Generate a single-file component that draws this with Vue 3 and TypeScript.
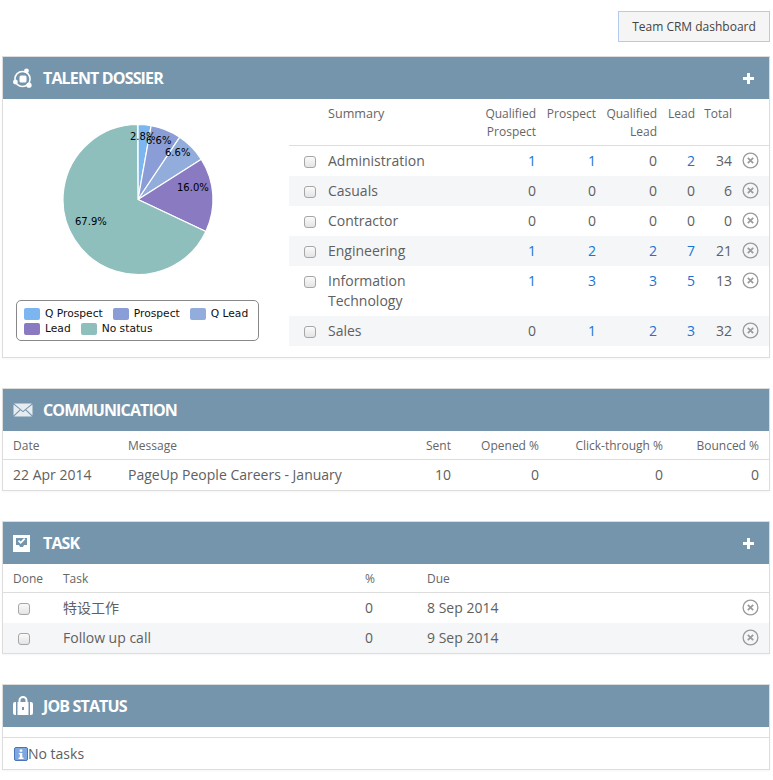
<template>
  <div class="page">
    <div class="top-bar">
      <button class="crm-btn" type="button">Team CRM dashboard</button>
    </div>

    <section class="panel">
      <header class="panel-head">
        <svg class="head-icon" viewBox="0 0 20 20" width="20" height="20">
          <circle cx="9.5" cy="11" r="7.6" fill="none" stroke="#fff" stroke-width="1.5" />
          <circle cx="13.5" cy="2.8" r="2.4" fill="#fff" />
          <circle cx="2.4" cy="14" r="2.4" fill="#fff" />
          <circle cx="16" cy="17.2" r="2.6" fill="#fff" />
          <rect x="6.5" y="7.5" width="7" height="7" rx="1.5" fill="#fff" />
        </svg>
        <h2>TALENT DOSSIER</h2>
        <svg class="plus" viewBox="0 0 11 11" width="11" height="11">
          <path d="M4 0h3v4h4v3H7v4H4V7H0V4h4z" fill="#fff" />
        </svg>
      </header>
      <div class="dossier-body">
        <div class="chart-col">
          <svg class="pie" viewBox="0 0 280 165" width="280" height="165">
            <path
              v-for="s in slices"
              :key="s.name"
              :d="s.path"
              :fill="s.color"
              stroke="#fff"
              stroke-width="1.2"
            />
            <text
              v-for="s in slices"
              :key="s.name + '-label'"
              :x="s.lx"
              :y="s.ly"
              class="pie-label"
            >{{ s.pct }}</text>
          </svg>
          <div class="legend">
            <span v-for="s in slices" :key="s.name" class="legend-item">
              <i class="swatch" :style="{ background: s.color }"></i>{{ s.name }}
            </span>
          </div>
        </div>
        <table class="grid summary">
          <colgroup>
            <col style="width: 39px" />
            <col />
            <col style="width: 52px" />
            <col style="width: 60px" />
            <col style="width: 61px" />
            <col style="width: 38px" />
            <col style="width: 37px" />
            <col style="width: 37px" />
          </colgroup>
          <thead>
            <tr>
              <th></th>
              <th class="left wide">Summary</th>
              <th>Qualified Prospect</th>
              <th>Prospect</th>
              <th>Qualified Lead</th>
              <th>Lead</th>
              <th>Total</th>
              <th></th>
            </tr>
          </thead>
          <tbody>
            <tr v-for="row in summaryRows" :key="row.name">
              <td class="check"><input type="checkbox" /></td>
              <td class="left name">{{ row.name }}</td>
              <td v-for="(n, i) in row.counts" :key="i">
                <a v-if="n > 0" class="count">{{ n }}</a>
                <template v-else>0</template>
              </td>
              <td>{{ row.total }}</td>
              <td class="remove">
                <svg viewBox="0 0 17 17" width="17" height="17">
                  <circle cx="8.5" cy="8.5" r="7.4" fill="none" stroke="#9a9a9a" stroke-width="1.3" />
                  <path d="M5.8 5.8l5.4 5.4M11.2 5.8l-5.4 5.4" stroke="#9a9a9a" stroke-width="1.7" />
                </svg>
              </td>
            </tr>
          </tbody>
        </table>
      </div>
    </section>

    <section class="panel">
      <header class="panel-head">
        <svg class="head-icon" viewBox="0 0 20 20" width="20" height="20">
          <path d="M1 3.5h18L10 11z" fill="#e6ecf0" />
          <path d="M0.5 4.5v11l6.3-6zM19.5 4.5v11l-6.3-6zM1 16.5l6.6-6.3L10 12.3l2.4-2.1 6.6 6.3z" fill="#e6ecf0" />
        </svg>
        <h2>COMMUNICATION</h2>
      </header>
      <table class="grid comms">
        <colgroup>
          <col style="width: 125px" />
          <col />
          <col style="width: 60px" />
          <col style="width: 88px" />
          <col style="width: 124px" />
          <col style="width: 96px" />
          <col style="width: 10px" />
        </colgroup>
        <thead>
          <tr>
            <th class="left first">Date</th>
            <th class="left">Message</th>
            <th>Sent</th>
            <th>Opened %</th>
            <th>Click-through %</th>
            <th>Bounced %</th>
            <th></th>
          </tr>
        </thead>
        <tbody>
          <tr>
            <td class="left first">22 Apr 2014</td>
            <td class="left">PageUp People Careers - January</td>
            <td>10</td>
            <td>0</td>
            <td>0</td>
            <td>0</td>
            <td></td>
          </tr>
        </tbody>
      </table>
    </section>

    <section class="panel">
      <header class="panel-head">
        <svg class="head-icon" viewBox="0 0 20 20" width="20" height="20">
          <path d="M0 2h17v17H0z" fill="#fff" />
          <path d="M3 5h11v7h-3l-1 2H7l-1-2H3z" fill="#7595ac" />
          <path d="M5.5 7.7l2.2 2.2 4-4.2" fill="none" stroke="#fff" stroke-width="1.7" />
        </svg>
        <h2>TASK</h2>
        <svg class="plus" viewBox="0 0 11 11" width="11" height="11">
          <path d="M4 0h3v4h4v3H7v4H4V7H0V4h4z" fill="#fff" />
        </svg>
      </header>
      <table class="grid tasks">
        <colgroup>
          <col style="width: 60px" />
          <col style="width: 302px" />
          <col style="width: 62px" />
          <col />
          <col style="width: 37px" />
        </colgroup>
        <thead>
          <tr>
            <th class="left first">Done</th>
            <th class="left">Task</th>
            <th class="left">%</th>
            <th class="left">Due</th>
            <th></th>
          </tr>
        </thead>
        <tbody>
          <tr v-for="task in tasks" :key="task.name">
            <td class="check done"><input type="checkbox" /></td>
            <td class="left">{{ task.name }}</td>
            <td class="left">{{ task.pct }}</td>
            <td class="left">{{ task.due }}</td>
            <td class="remove">
              <svg viewBox="0 0 17 17" width="17" height="17">
                <circle cx="8.5" cy="8.5" r="7.4" fill="none" stroke="#9a9a9a" stroke-width="1.3" />
                <path d="M5.8 5.8l5.4 5.4M11.2 5.8l-5.4 5.4" stroke="#9a9a9a" stroke-width="1.7" />
              </svg>
            </td>
          </tr>
        </tbody>
      </table>
    </section>

    <section class="panel">
      <header class="panel-head">
        <svg class="head-icon" viewBox="0 0 20 20" width="20" height="20">
          <path d="M0 8a2 2 0 0 1 2-2h1v13H2a2 2 0 0 1-2-2zM17 6h1a2 2 0 0 1 2 2v9a2 2 0 0 1-2 2h-1z" fill="#fff" />
          <path
            fill="#fff"
            fill-rule="evenodd"
            d="M4.5 6h1V4.500a4.500 4.500 0 0 1 9 0V6h1v13h-11zM7.500 6h5V4.500a2.500 2.500 0 0 0-5 0zM9 11v3h2v-3z"
          />
        </svg>
        <h2>JOB STATUS</h2>
      </header>
      <div class="empty">
        <svg viewBox="0 0 14 14" width="14" height="14">
          <rect x="0.5" y="0.5" width="13" height="13" rx="1.5" fill="#7fa7e0" stroke="#4a74b8" />
          <rect x="5.7" y="2.5" width="2.6" height="2.2" fill="#fff" />
          <path d="M4.8 6h3.5v4.5h1.200V12H4.600v-1.500h1.200V7.300h-1z" fill="#fff" />
        </svg>
        <span>No tasks</span>
      </div>
    </section>
  </div>
</template>

<script setup lang="ts">
interface SummaryRow {
  name: string
  counts: number[]
  total: number
}

const summaryRows: SummaryRow[] = [
  { name: 'Administration', counts: [1, 1, 0, 2], total: 34 },
  { name: 'Casuals', counts: [0, 0, 0, 0], total: 6 },
  { name: 'Contractor', counts: [0, 0, 0, 0], total: 0 },
  { name: 'Engineering', counts: [1, 2, 2, 7], total: 21 },
  { name: 'Information Technology', counts: [1, 3, 3, 5], total: 13 },
  { name: 'Sales', counts: [0, 1, 2, 3], total: 32 }
]

const tasks = [
  { name: '特设工作', pct: 0, due: '8 Sep 2014' },
  { name: 'Follow up call', pct: 0, due: '9 Sep 2014' }
]

const cx = 135
const cy = 80.5
const radius = 75

const segments = [
  { name: 'Q Prospect', value: 2.8, color: '#7cb6f0', lx: 127, ly: 21 },
  { name: 'Prospect', value: 6.6, color: '#8a9dd6', lx: 143, ly: 25 },
  { name: 'Q Lead', value: 6.6, color: '#92acdb', lx: 162, ly: 37 },
  { name: 'Lead', value: 16.0, color: '#897ac2', lx: 174, ly: 72 },
  { name: 'No status', value: 67.9, color: '#8fbfbc', lx: 72, ly: 106 }
]

function point(turn: number) {
  const a = turn * 2 * Math.PI
  return `${cx + radius * Math.sin(a)} ${cy - radius * Math.cos(a)}`
}

let used = 0
const slices = segments.map((s) => {
  const from = used / 100
  used += s.value
  const to = Math.min(used / 100, 1)
  const large = to - from > 0.5 ? 1 : 0
  return {
    ...s,
    pct: s.value.toFixed(1) + '%',
    path: `M${cx} ${cy}L${point(from)}A${radius} ${radius} 0 ${large} 1 ${point(to)}Z`
  }
})
</script>

<style scoped>
.page {
  padding: 11px 3px 0 2px;
  color: #606060;
  font-family: "Open Sans", "Noto Sans CJK SC", sans-serif;
  font-size: 14px;
}

.top-bar {
  display: flex;
  justify-content: flex-end;
  margin-bottom: 14px;
}

.crm-btn {
  width: 152px;
  height: 31px;
  padding: 0;
  border: 1px solid #b4cbee;
  background: #f5f5f5;
  color: #444;
  font-family: inherit;
  font-size: 12px;
}

.panel {
  margin-bottom: 30px;
  border: 1px solid #ddd;
  box-shadow: 0 1px 2px rgba(0, 0, 0, 0.04);
}

.panel-head {
  display: flex;
  align-items: center;
  height: 42px;
  padding: 0 15px 0 10px;
  background: #7595ac;
}

.head-icon {
  flex: none;
  margin-right: 10px;
}

.panel-head h2 {
  flex: 1;
  margin: 0;
  color: #fff;
  font-size: 16px;
  font-weight: 700;
  letter-spacing: -0.85px;
}

.dossier-body {
  display: flex;
}

.chart-col {
  flex: none;
  width: 286px;
  height: 258px;
}

.pie {
  display: block;
  margin-top: 20px;
}

.pie-label {
  font-family: "DejaVu Sans", sans-serif;
  font-size: 10px;
  fill: #000;
}

.legend {
  display: flex;
  flex-wrap: wrap;
  align-content: flex-start;
  gap: 2px 10px;
  box-sizing: border-box;
  width: 243px;
  height: 41px;
  margin: 16px 0 0 13px;
  padding: 6px 7px;
  border: 1px solid #888;
  border-radius: 5px;
  color: #111;
  font-family: "DejaVu Sans", sans-serif;
  font-size: 10.7px;
  line-height: 13px;
}

.legend-item {
  display: flex;
  align-items: center;
}

.swatch {
  width: 16px;
  height: 12px;
  margin-right: 5px;
  border-radius: 2px;
}

.grid {
  width: 100%;
  border-collapse: separate;
  border-spacing: 0;
  table-layout: fixed;
}

.summary {
  flex: 1;
  align-self: flex-start;
  width: 480px;
}

.grid th {
  padding: 6px 0 4px;
  border-bottom: 1px solid #ddd;
  color: #666;
  font-size: 12px;
  font-weight: 400;
  line-height: 18px;
  text-align: right;
  vertical-align: top;
}

.grid th.wide {
  font-size: 12.6px;
}

.grid td {
  padding: 5px 0;
  line-height: 20px;
  text-align: right;
  vertical-align: top;
}

.grid .left {
  text-align: left;
}

.grid .first {
  padding-left: 10px;
}

.grid .name {
  padding-right: 20px;
}

.grid tbody tr:nth-child(even) td {
  background: #f5f6f8;
}

.grid .check {
  text-align: center;
  padding-left: 3px;
}

.grid .check.done {
  padding-left: 0;
  padding-right: 18px;
}

.check input {
  appearance: none;
  display: inline-block;
  box-sizing: border-box;
  width: 12px;
  height: 12px;
  margin: 5px 0 0;
  border: 1px solid #a6a6a6;
  border-radius: 3px;
  background: linear-gradient(#fafafa, #e4e4e4);
  vertical-align: top;
}

.count {
  color: #1b74d4;
}

.grid .remove {
  padding: 6px 0 0;
  text-align: center;
  line-height: 0;
}

.empty {
  display: flex;
  align-items: center;
  height: 31px;
  margin-top: 10px;
  padding-left: 11px;
  border-top: 1px solid #ddd;
}

.empty svg {
  flex: none;
  margin-top: 1px;
}
</style>

<style>
html,
body {
  background: #fff;
}
</style>
